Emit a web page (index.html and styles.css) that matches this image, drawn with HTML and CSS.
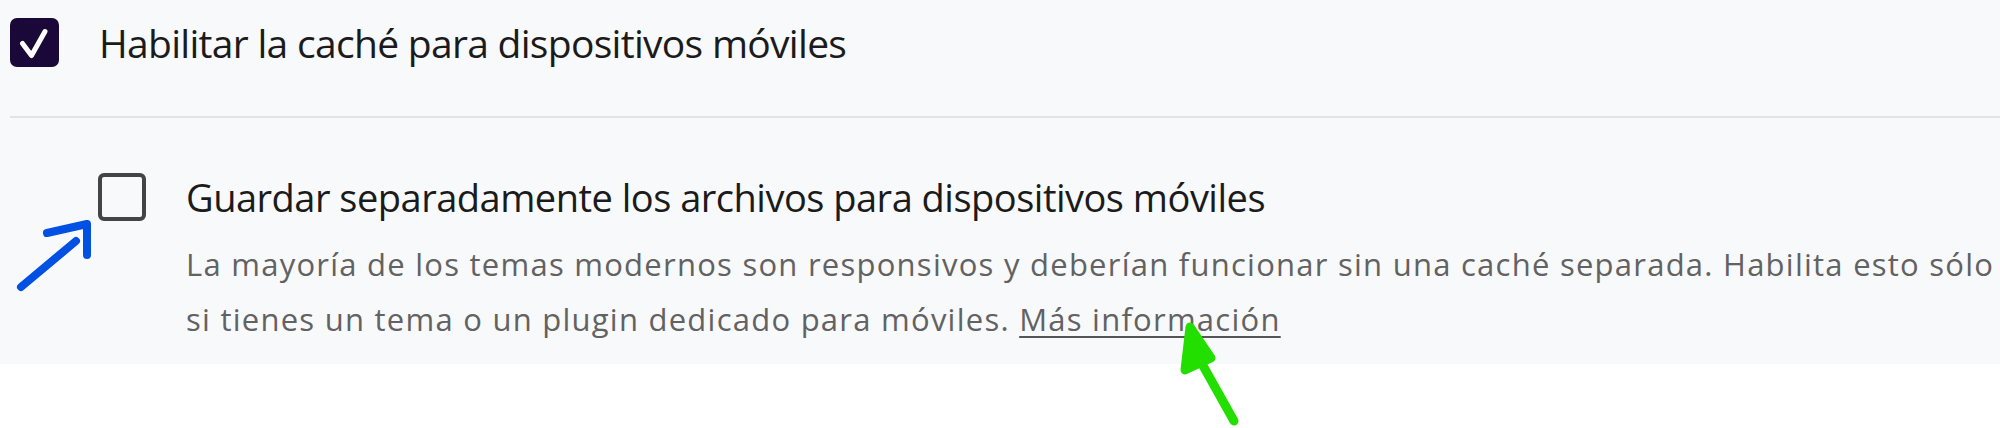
FILE: index.html
```html
<!DOCTYPE html>
<html lang="es">
<head>
<meta charset="utf-8">
<title>Caché móviles</title>
<link rel="stylesheet" href="styles.css">
</head>
<body>
<div class="page">
  <section class="panel">
    <div class="row row-main">
      <span class="box box-checked">
        <svg viewBox="0 0 49 49" width="49" height="49"><polyline points="12.5,25.5 21.5,37.5 35,13.5" fill="none" stroke="#fff" stroke-width="5" stroke-linecap="round" stroke-linejoin="round"/></svg>
      </span>
      <span class="title-main">Habilitar la caché para dispositivos móviles</span>
    </div>
    <hr class="divider">
    <div class="row row-sub">
      <span class="box box-empty"></span>
      <div class="sub-text">
        <div class="title-sub">Guardar separadamente los archivos para dispositivos móviles</div>
        <p class="desc">La mayoría de los temas modernos son responsivos y deberían funcionar sin una caché separada. Habilita esto sólo si tienes un tema o un plugin dedicado para móviles. <a class="link" href="#">Más información</a></p>
      </div>
    </div>
  </section>
  <svg class="marks" width="2000" height="428" viewBox="0 0 2000 428">
    <g stroke="#0051e3" stroke-width="8" stroke-linecap="round" stroke-linejoin="round" fill="none">
      <path d="M21 287 L76 241"/>
      <path d="M47 233 L87 224 L87 255"/>
    </g>
    <g stroke="#22df00" stroke-width="9" stroke-linecap="round" stroke-linejoin="round" fill="#22df00">
      <path d="M1190 327 L1185 370 L1211 358 Z"/>
      <path d="M1197 355 L1234 421" fill="none"/>
    </g>
  </svg>
</div>
</body>
</html>
```
FILE: styles.css
```css
html, body {
  margin: 0;
  padding: 0;
  background: #ffffff;
}
body {
  font-family: "Open Sans", "Noto Sans", sans-serif;
  width: 2000px;
  height: 428px;
  overflow: hidden;
}
.page {
  position: relative;
  width: 2000px;
  height: 428px;
}
.panel {
  background: #f8f9fb;
  padding: 18px 0 17px 10px;
}
.row {
  display: flex;
  align-items: flex-start;
}
.row-main {
  gap: 40px;
}
.box {
  flex: none;
  box-sizing: border-box;
  display: block;
}
.box-checked {
  width: 49px;
  height: 49px;
  border-radius: 7px;
  background: #1a0838;
}
.box-checked svg {
  display: block;
}
.box-empty {
  width: 48px;
  height: 48px;
  border: 4px solid #444444;
  border-radius: 6px;
  background: transparent;
}
.title-main {
  font-size: 39px;
  letter-spacing: -0.7px;
  line-height: 49px;
  color: #1b1b1b;
}
.divider {
  border: 0;
  height: 2px;
  background: #e0e3e9;
  margin: 49px 0 0 0;
}
.row-sub {
  padding: 55px 0 0 88px;
  gap: 40px;
}
.sub-text {
  flex: 1;
  min-width: 0;
}
.title-sub {
  font-size: 38px;
  letter-spacing: -0.5px;
  line-height: 48px;
  color: #1b1b1b;
}
.desc {
  margin: 16px 0 0 0;
  font-size: 31px;
  letter-spacing: 1.25px;
  line-height: 55px;
  color: #626262;
}
.link {
  color: #626262;
  text-decoration: underline;
  text-decoration-color: #555555;
  text-decoration-thickness: 2px;
  text-underline-offset: 5px;
}
.marks {
  position: absolute;
  left: 0;
  top: 0;
  pointer-events: none;
}
```
